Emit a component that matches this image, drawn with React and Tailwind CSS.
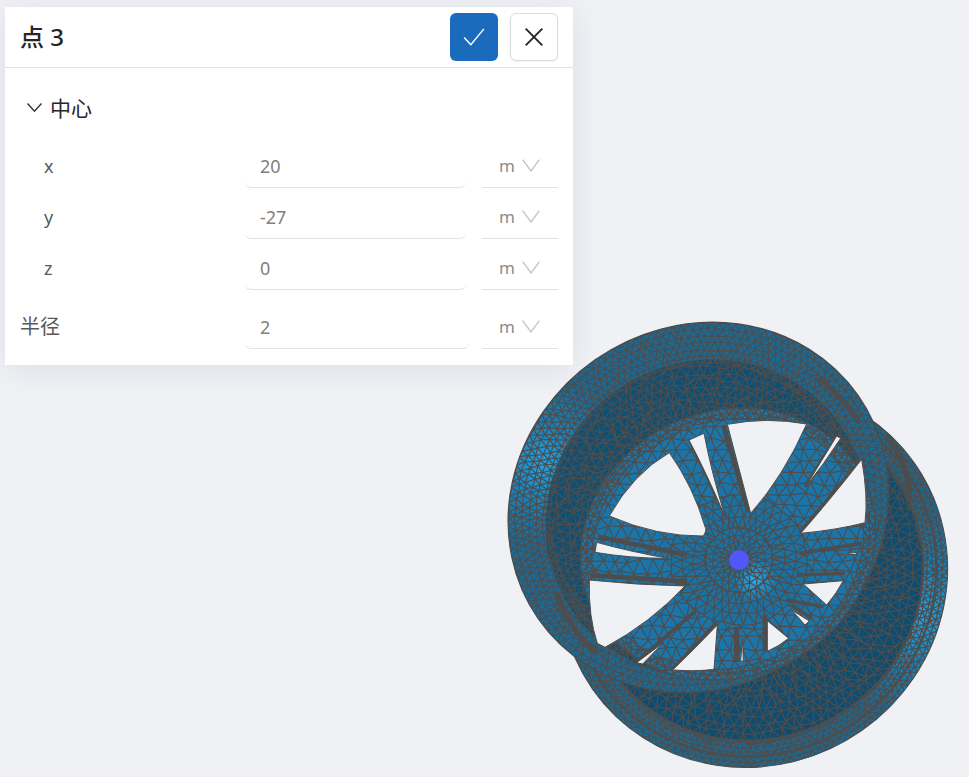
import React from "react";

// seeded random so the mesh stays the same on every render
function makeRandom(seed) {
  let a = seed;
  return () => {
    a = (a + 0x6d2b79f5) | 0;
    let t = Math.imul(a ^ (a >>> 15), 1 | a);
    t = (t + Math.imul(t ^ (t >>> 7), 61 | t)) ^ t;
    return ((t ^ (t >>> 14)) >>> 0) / 4294967296;
  };
}

const line = (p, q) => `M${p[0].toFixed(1)} ${p[1].toFixed(1)}L${q[0].toFixed(1)} ${q[1].toFixed(1)}`;

function polarMesh({ cx, cy, rx, ry, rot = 0, from, to, rings, segs, jitter = 3, seed = 1 }) {
  const rand = makeRandom(seed);
  const c = Math.cos((rot * Math.PI) / 180);
  const s = Math.sin((rot * Math.PI) / 180);
  const pts = [];
  for (let i = 0; i <= rings; i++) {
    const f = from + ((to - from) * i) / rings;
    const row = [];
    for (let j = 0; j < segs; j++) {
      const an = (2 * Math.PI * (j + (i % 2) / 2)) / segs;
      const x = rx * f * Math.cos(an);
      const y = ry * f * Math.sin(an);
      row.push([
        cx + x * c - y * s + (rand() - 0.5) * jitter * 2,
        cy + x * s + y * c + (rand() - 0.5) * jitter * 2,
      ]);
    }
    pts.push(row);
  }
  let d = "";
  for (let i = 0; i <= rings; i++) {
    for (let j = 0; j < segs; j++) {
      d += line(pts[i][j], pts[i][(j + 1) % segs]);
      if (i < rings) {
        d += line(pts[i][j], pts[i + 1][j]);
        const other = i % 2 ? (j + 1) % segs : (j - 1 + segs) % segs;
        d += line(pts[i][j], pts[i + 1][other]);
      }
    }
  }
  return d;
}

function latticeMesh(x0, y0, x1, y1, cell, jitter, seed) {
  const rand = makeRandom(seed);
  const rows = [];
  const h = cell * 0.87;
  for (let y = y0, i = 0; y < y1; y += h, i++) {
    const row = [];
    for (let x = x0 + (i % 2 ? cell / 2 : 0); x < x1; x += cell) {
      row.push([x + (rand() - 0.5) * jitter * 2, y + (rand() - 0.5) * jitter * 2]);
    }
    rows.push(row);
  }
  let d = "";
  rows.forEach((row, i) => {
    row.forEach((p, j) => {
      if (row[j + 1]) d += line(p, row[j + 1]);
      const next = rows[i + 1];
      if (next) {
        if (next[j]) d += line(p, next[j]);
        const k = i % 2 ? j + 1 : j - 1;
        if (next[k]) d += line(p, next[k]);
      }
    });
  });
  return d;
}

const BACK = { cx: 791, cy: 799, rx: 590, ry: 565, rot: -35 };
const FRONT = { cx: 625, cy: 592, rx: 585, ry: 540, rot: -35 };
const BARREL = { cx: 650, cy: 625, rx: 490, ry: 470, rot: -35 };
const DISK = { cx: 714, cy: 702, rx: 452, ry: 398, rot: -25 };
const HUB = { cx: 747, cy: 750, rx: 205, ry: 195, rot: 0 };

const MESHES = {
  back: polarMesh({ ...BACK, from: 0.87, to: 1, rings: 5, segs: 160, seed: 3 }),
  backInner: polarMesh({ ...BACK, from: 0.45, to: 0.87, rings: 9, segs: 105, jitter: 9, seed: 5 }),
  front: polarMesh({ ...FRONT, from: 0.78, to: 1, rings: 6, segs: 150, jitter: 4, seed: 7 }),
  barrel: polarMesh({ ...BARREL, from: 0.6, to: 1, rings: 9, segs: 110, jitter: 9, seed: 11 }),
  disk: latticeMesh(260, 290, 1180, 1120, 38, 7, 13),
  rim: polarMesh({ ...DISK, from: 0.92, to: 1, rings: 2, segs: 110, jitter: 2, seed: 17 }),
  hubInner: polarMesh({ ...HUB, from: 0.15, to: 0.5, rings: 3, segs: 22, jitter: 3, seed: 19 }),
  hubOuter: polarMesh({ ...HUB, from: 0.5, to: 1, rings: 3, segs: 40, jitter: 4, seed: 23 }),
};

// openings between the spokes
const HOLES = [
  "M712 343Q830 320 950 342Q880 500 782 610Z",
  "M597 390L642 370Q665 490 706 622Q650 490 597 390Z",
  "M538 428Q430 490 358 618Q500 680 640 678Q652 660 645 650Q610 530 538 428Z",
  "M320 697L315 727Q420 745 535 745Q420 725 320 697Z",
  "M298 810Q295 920 322 1000L345 1012Q480 940 585 828Q440 825 298 810Z",
  "M440 1058L520 998L458 1062Z",
  "M548 1080Q620 1085 672 1078L682 945Q620 1010 548 1080Z",
  "M752 1055L760 1052L757 985Z",
  "M832 932L896 985Q865 1010 832 1024Z",
  "M905 900L958 933L945 945Z",
  "M940 822L1060 812Q1040 850 1010 885Z",
  "M1040 735L1100 727L1098 733Z",
  "M932 670Q1040 660 1125 638Q1135 560 1115 448Q1020 570 932 670Z",
  "M947 530L1040 378L1052 385Q1000 465 947 530Z",
];

// heavy dark edges along the spokes
const EDGES = [
  [325, 680, 590, 735, 14],
  [300, 795, 590, 815, 14],
  [700, 345, 775, 605, 14],
  [1040, 380, 945, 530, 10],
  [1115, 450, 930, 670, 14],
  [1115, 700, 930, 730, 11],
  [1065, 790, 920, 795, 10],
  [890, 870, 1000, 890, 10],
  [350, 1010, 585, 830, 8],
  [440, 1055, 620, 900, 11],
  [550, 1078, 680, 940, 14],
  [740, 950, 740, 1055, 16],
  [825, 915, 825, 1025, 14],
  [830, 930, 895, 985, 8],
  [905, 885, 965, 925, 10],
  [597, 390, 706, 622, 6],
];

function Oval({ shape, ...props }) {
  return (
    <ellipse
      cx={shape.cx}
      cy={shape.cy}
      rx={shape.rx}
      ry={shape.ry}
      transform={`rotate(${shape.rot} ${shape.cx} ${shape.cy})`}
      {...props}
    />
  );
}

function WheelMesh() {
  const mesh = { fill: "none", stroke: "#4d4d4d", strokeWidth: 3.6 };
  return (
    <svg
      viewBox="0 0 1437 1401"
      className="absolute left-[490px] top-[310px] h-[467px] w-[479px]"
    >
      <defs>
        <radialGradient id="frontFill" gradientUnits="userSpaceOnUse" cx="320" cy="220" r="240">
          <stop offset="0" stopColor="#23a2e2" />
          <stop offset="0.5" stopColor="#1b7fb3" />
          <stop offset="1" stopColor="#1a6a96" />
        </radialGradient>
        <radialGradient id="backFill" gradientUnits="userSpaceOnUse" cx="1120" cy="1170" r="300">
          <stop offset="0" stopColor="#23a3e3" />
          <stop offset="0.5" stopColor="#1b7fb3" />
          <stop offset="1" stopColor="#1a6a96" />
        </radialGradient>
        <radialGradient id="hubFill" gradientUnits="userSpaceOnUse" cx="795" cy="810" r="65">
          <stop offset="0" stopColor="#29aeee" />
          <stop offset="1" stopColor="#29aeee" stopOpacity="0" />
        </radialGradient>
        <clipPath id="backClip"><Oval shape={BACK} /></clipPath>
        <clipPath id="frontClip"><Oval shape={FRONT} /></clipPath>
        <clipPath id="barrelClip"><Oval shape={BARREL} /></clipPath>
        <clipPath id="diskClip"><Oval shape={DISK} /></clipPath>
      </defs>

      <Oval shape={BACK} fill="url(#backFill)" />
      <Oval shape={{ ...BACK, cy: 790, rx: 515, ry: 495 }} fill="#0e4c70" />
      <g clipPath="url(#backClip)">
        <path d={MESHES.back} {...mesh} />
        <path d={MESHES.backInner} {...mesh} />
        <Oval shape={{ ...BACK, rx: 555, ry: 532 }} fill="none" stroke="#4d4d4d" strokeWidth="6" />
        <Oval shape={{ ...BACK, cy: 790, rx: 515, ry: 495 }} fill="none" stroke="#4d4d4d" strokeWidth="6" />
        <path d="M1190 380Q1265 470 1255 570" fill="none" stroke="#4d4d4d" strokeWidth="18" />
      </g>
      <Oval shape={BACK} fill="none" stroke="#4d4d4d" strokeWidth="3" />

      <Oval shape={FRONT} fill="url(#frontFill)" />
      <Oval shape={BARREL} fill="#0e4f74" />
      <g clipPath="url(#frontClip)">
        <path d={MESHES.front} {...mesh} />
        <path d={MESHES.barrel} {...mesh} clipPath="url(#barrelClip)" />
        <path d="M985 205Q1060 260 1110 340" fill="none" stroke="#4d4d4d" strokeWidth="16" />
        <path d="M200 850Q230 950 320 1030" fill="none" stroke="#4d4d4d" strokeWidth="16" />
      </g>
      <Oval shape={FRONT} fill="none" stroke="#4d4d4d" strokeWidth="4" />

      <Oval shape={DISK} fill="#1a76aa" />
      <g clipPath="url(#diskClip)">
        <path d={MESHES.disk} {...mesh} />
        <Oval shape={HUB} fill="#1a72a4" />
        <circle cx="795" cy="810" r="65" fill="url(#hubFill)" />
        <path d={MESHES.hubInner} {...mesh} />
        <path d={MESHES.hubOuter} {...mesh} />
        <path d={MESHES.rim} {...mesh} />
      </g>
      <Oval shape={DISK} fill="none" stroke="#4d4d4d" strokeWidth="3.6" />

      {EDGES.map(([x1, y1, x2, y2, w]) => (
        <line key={`${x1}-${y1}`} x1={x1} y1={y1} x2={x2} y2={y2} stroke="#4d4d4d" strokeWidth={w} />
      ))}
      {HOLES.map((d) => (
        <path key={d} d={d} fill="#f0f1f5" stroke="#4d4d4d" strokeWidth="3" />
      ))}
      <circle cx="747" cy="750" r="30" fill="#5158fb" />
    </svg>
  );
}

function ChevronDown({ className }) {
  return (
    <svg viewBox="0 0 18 13" fill="none" stroke="currentColor" strokeWidth="1.4" className={className}>
      <path d="M0.6 0.6L9 12L17.4 0.6" />
    </svg>
  );
}

function FieldRow({ label, value, labelClass, rowClass, inputClass }) {
  return (
    <div className={`flex items-stretch ${rowClass}`}>
      <label className={`flex w-[225px] shrink-0 items-center pb-[6px] text-[#595959] ${labelClass}`}>
        {label}
      </label>
      <input
        readOnly
        value={value}
        className={`h-full rounded-b-md border-b border-[#e3e3e6] bg-white px-[15px] pb-[6px] text-[18px] text-[#808080] outline-none ${inputClass}`}
      />
      <div className="ml-auto flex w-[76px] items-center border-b border-[#e3e3e6] pl-[17px] pb-[5px]">
        <span className="text-[17px] text-[#8c8c8c]">m</span>
        <ChevronDown className="ml-[7px] mb-[1px] h-[13px] w-[18px] text-[#c6c6c6]" />
      </div>
    </div>
  );
}

export default function App() {
  return (
    <div className="relative h-[777px] w-[969px] overflow-hidden bg-[#f0f1f5] pl-[5px] pt-[7px] font-['Noto_Sans','Noto_Sans_CJK_SC',sans-serif]">
      <WheelMesh />

      <div className="relative h-[358px] w-[568px] bg-white shadow-[0_4px_28px_rgba(30,40,70,0.09)]">
        <div className="flex h-[61px] items-center border-b border-[#e2e2e5] pl-[15px] pr-[15px]">
          <h1 className="text-[24px] font-medium text-[#262626]">点 3</h1>
          <button className="ml-auto flex h-[48px] w-[48px] items-center justify-center rounded-md bg-[#1a6bbb]">
            <svg viewBox="0 0 24 20" fill="none" stroke="#ffffff" strokeWidth="1.6" className="h-[18px] w-[22px]">
              <path d="M1 10.5L8.5 18.5L23 1" />
            </svg>
          </button>
          <button className="ml-[12px] flex h-[48px] w-[48px] items-center justify-center rounded-md border border-[#dcdcdc] bg-white shadow-[0_1px_2px_rgba(0,0,0,0.06)]">
            <svg viewBox="0 0 18 18" fill="none" stroke="#262626" strokeWidth="1.9" className="h-[18px] w-[18px]">
              <path d="M0.7 0.7L17.3 17.3M17.3 0.7L0.7 17.3" />
            </svg>
          </button>
        </div>

        <div className="pl-[15px] pr-[15px]">
          <div className="flex h-[82px] items-center pl-[7px]">
            <svg viewBox="0 0 15 9" fill="none" stroke="#333333" strokeWidth="1.4" className="mb-[3px] h-[9px] w-[15px]">
              <path d="M0.5 0.5L7.5 8.2L14.5 0.5" />
            </svg>
            <span className="ml-[8px] text-[21px] text-[#262626]">中心</span>
          </div>
          <FieldRow label="x" value="20" labelClass="pl-[24px] text-[18px]" rowClass="h-[38px]" inputClass="w-[221px]" />
          <FieldRow label="y" value="-27" labelClass="pl-[24px] text-[18px]" rowClass="mt-[13px] h-[38px]" inputClass="w-[221px]" />
          <FieldRow label="z" value="0" labelClass="pl-[24px] text-[18px]" rowClass="mt-[13px] h-[38px]" inputClass="w-[221px]" />
          <FieldRow label="半径" value="2" labelClass="text-[20px]" rowClass="mt-[21px] h-[38px]" inputClass="w-[224px]" />
        </div>
      </div>
    </div>
  );
}
